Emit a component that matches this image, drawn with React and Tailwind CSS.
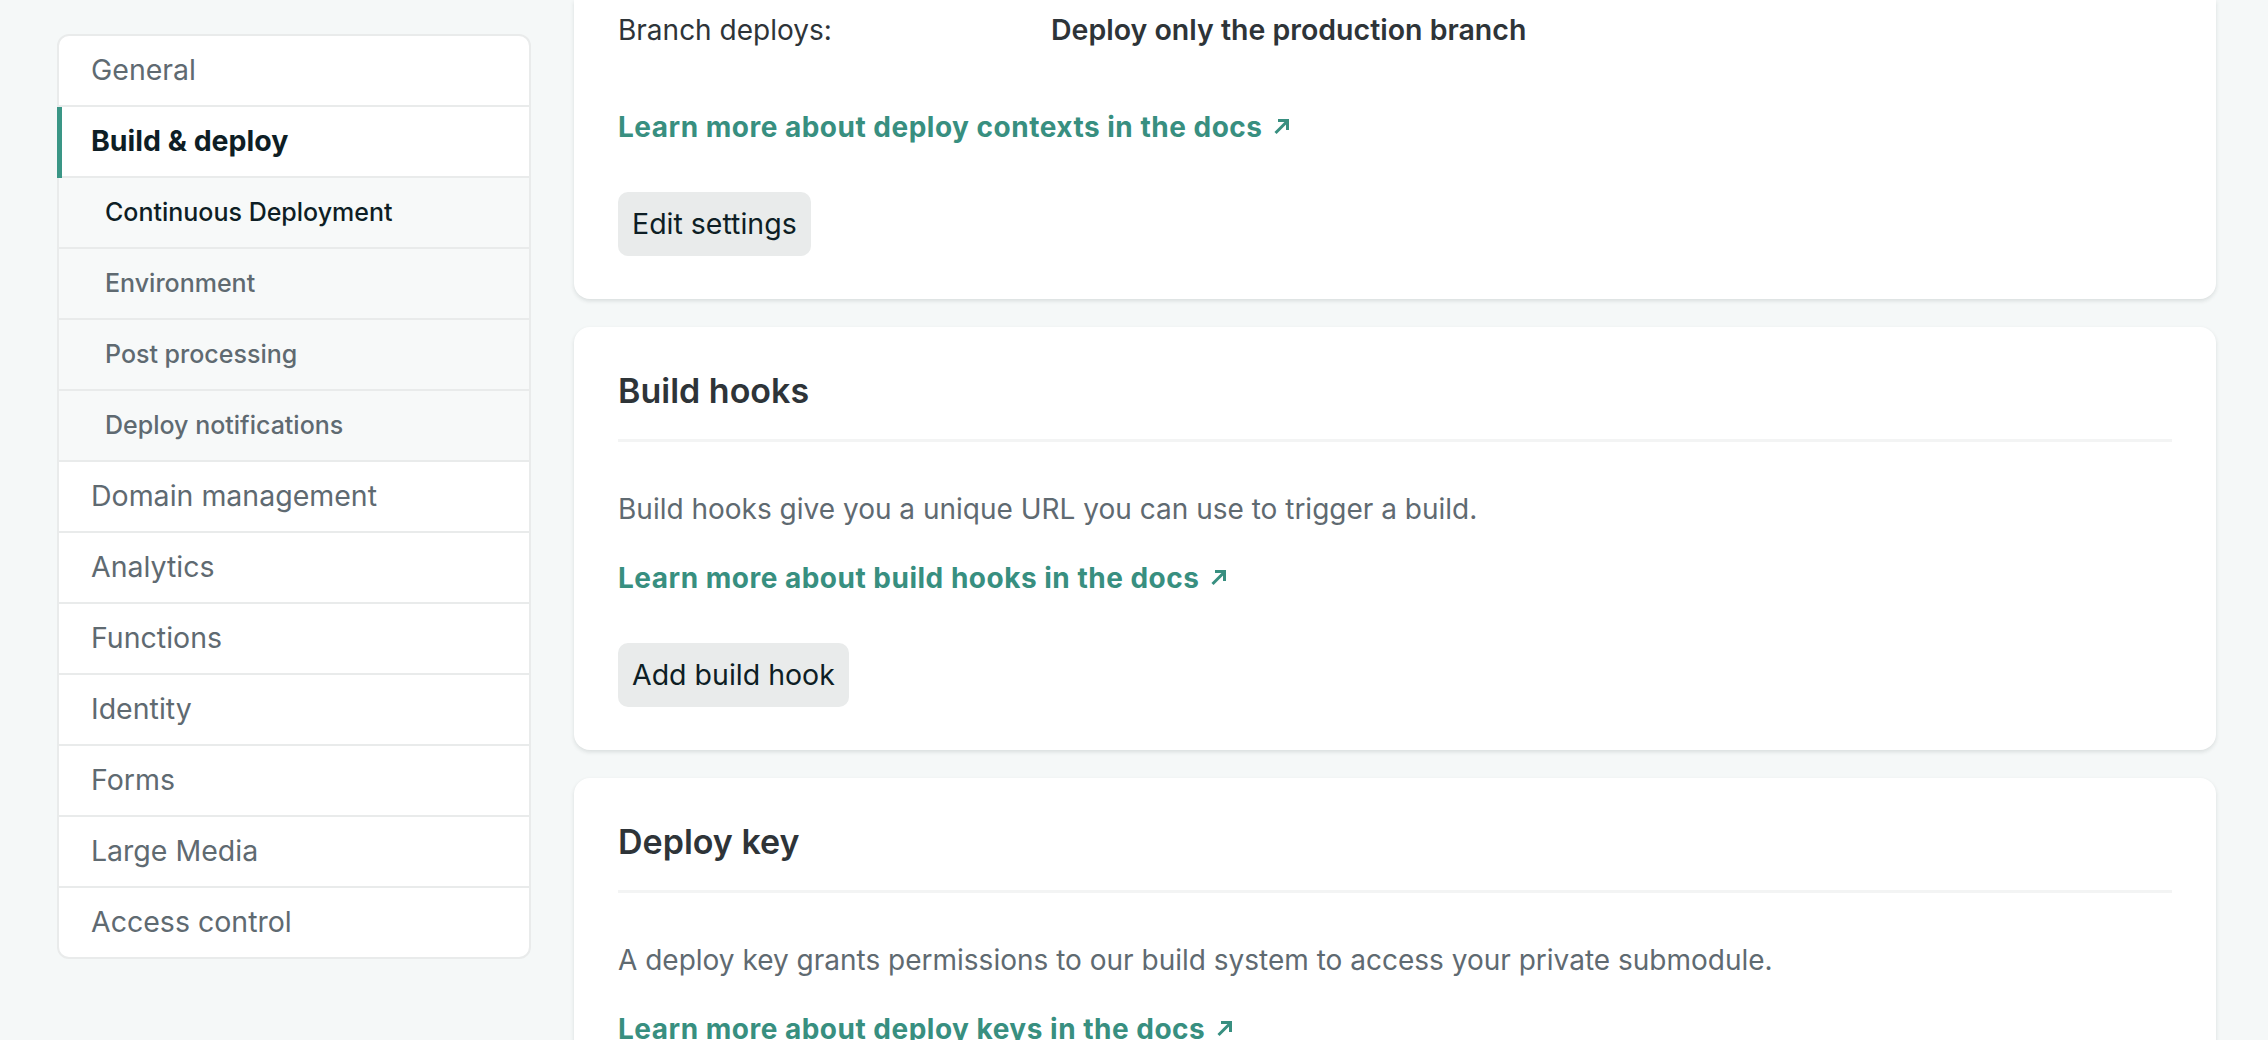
import React from 'react';

const navItems = [
    { label: 'General' },
    { label: 'Build & deploy', active: true },
    { label: 'Continuous Deployment', sub: true, current: true },
    { label: 'Environment', sub: true },
    { label: 'Post processing', sub: true },
    { label: 'Deploy notifications', sub: true },
    { label: 'Domain management' },
    { label: 'Analytics' },
    { label: 'Functions' },
    { label: 'Identity' },
    { label: 'Forms' },
    { label: 'Large Media' },
    { label: 'Access control' },
];

const ArrowUpRight = () => (
    <svg width="18" height="18" viewBox="0 0 18 18" fill="none" className="inline-block ml-[11px] -mt-[6px]">
        <path d="M2.5 16L14 4.5" stroke="currentColor" strokeWidth="3" />
        <path d="M5 3.5H14.5V13" stroke="currentColor" strokeWidth="3" />
    </svg>
);

const DocsLink = ({ children, className = '' }) => (
    <a href="#" className={`block text-[28px] leading-[42px] font-bold tracking-[0.5px] text-[#388f80] ${className}`}>
        {children}
        <ArrowUpRight />
    </a>
);

const Button = ({ children, className = '' }) => (
    <button className={`h-[64px] px-[14px] rounded-[10px] bg-[#e9ebeb] text-[28.5px] text-[#0e1e25] ${className}`}>
        {children}
    </button>
);

const Card = ({ title, children, className = '' }) => (
    <section className={`bg-white rounded-[16px] px-[44px] pt-[44px] pb-[43px] shadow-[0_2px_4px_rgba(14,30,37,0.12)] ${className}`}>
        <h2 className="text-[34px] leading-[40px] font-semibold text-[#2e3438] pb-[28px] border-b-[3px] border-[#f3f4f4]">
            {title}
        </h2>
        {children}
    </section>
);

export default function App() {
    return (
        <div className="h-[1040px] overflow-hidden bg-[#f5f8f8] flex gap-[43px] pl-[57px] pr-[52px] font-['Inter','Liberation_Sans',sans-serif]">
            {/* Sidebar */}
            <aside className="w-[474px] shrink-0 pt-[34px]">
                <nav className="border-2 border-[#e9ebeb] rounded-[12px] bg-white">
                    {navItems.map((item, i) => (
                        <div
                            key={item.label}
                            className={`relative flex items-center ${i < navItems.length - 1 ? 'h-[71px] border-b-2 border-[#e9ebeb]' : 'h-[69px]'} ${item.sub ? 'pl-[46px] bg-[#f7f9f9] text-[25px] font-medium' : 'pl-[32px] text-[28.5px]'} ${item.current || item.active ? 'text-[#0e1e25]' : 'text-[#5f6a71]'} ${item.active ? 'font-bold' : ''}`}
                        >
                            {item.active && <span className="absolute -left-[2px] top-0 bottom-[-2px] w-[5px] bg-[#3a9686]" />}
                            {item.label}
                        </div>
                    ))}
                </nav>
            </aside>

            {/* Main */}
            <main className="flex-1 flex flex-col gap-[28px]">
                <section className="bg-white rounded-b-[16px] px-[44px] pt-[9px] pb-[43px] shadow-[0_2px_4px_rgba(14,30,37,0.12)]">
                    <div className="flex text-[28px] leading-[42px] text-[#2e3438]">
                        <span className="w-[433px] shrink-0">Branch deploys:</span>
                        <span className="font-semibold text-[28.5px]">Deploy only the production branch</span>
                    </div>
                    <DocsLink className="mt-[55px]">Learn more about deploy contexts in the docs</DocsLink>
                    <Button className="mt-[44px]">Edit settings</Button>
                </section>

                <Card title="Build hooks">
                    <p className="mt-[46px] text-[28px] leading-[42px] text-[#5f6a71]">
                        Build hooks give you a unique URL you can use to trigger a build.
                    </p>
                    <DocsLink className="mt-[27px]">Learn more about build hooks in the docs</DocsLink>
                    <Button className="mt-[44px]">Add build hook</Button>
                </Card>

                <Card title="Deploy key">
                    <p className="mt-[46px] text-[28px] leading-[42px] text-[#5f6a71]">
                        A deploy key grants permissions to our build system to access your private submodule.
                    </p>
                    <DocsLink className="mt-[27px]">Learn more about deploy keys in the docs</DocsLink>
                    <Button className="mt-[44px]">Generate public deploy key</Button>
                </Card>
            </main>
        </div>
    );
}
